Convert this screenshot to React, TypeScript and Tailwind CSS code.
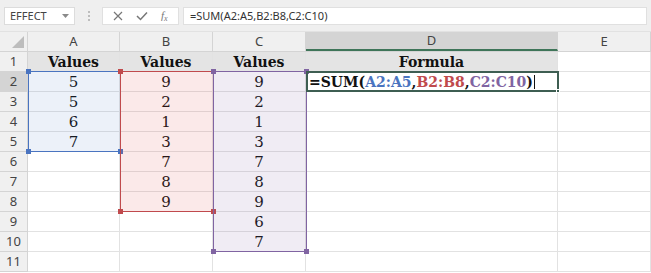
import React from 'react';

const cols = [
  { key: 'A', w: 'w-[92px]' },
  { key: 'B', w: 'w-[93px]' },
  { key: 'C', w: 'w-[93px]' },
  { key: 'D', w: 'w-[252px]' },
  { key: 'E', w: 'w-[93px]' },
];

const data: Record<string, string[]> = {
  A: ['Values', '5', '5', '6', '7'],
  B: ['Values', '9', '2', '1', '3', '7', '8', '9'],
  C: ['Values', '9', '2', '1', '3', '7', '8', '9', '6', '7'],
  D: ['Formula'],
};

const serif = { fontFamily: '"DejaVu Serif", "Liberation Serif", serif' };
const sans = { fontFamily: '"Noto Sans", "Open Sans", sans-serif' };

function Handle({ pos, color }: { pos: string; color: string }) {
  return <span className={`absolute w-[5px] h-[5px] ${pos} ${color}`} />;
}

function Range({ box, border, fill, handle }: { box: string; border: string; fill: string; handle: string }) {
  return (
    <div className={`absolute ${box} border ${border} ${fill} pointer-events-none`}>
      <Handle pos="-left-[3px] -top-[3px]" color={handle} />
      <Handle pos="-right-[3px] -top-[3px]" color={handle} />
      <Handle pos="-left-[3px] -bottom-[3px]" color={handle} />
      <Handle pos="-right-[3px] -bottom-[3px]" color={handle} />
    </div>
  );
}

export default function App() {
  const rows = Array.from({ length: 11 }, (_, i) => i + 1);

  return (
    <div className="w-[651px] h-[273px] bg-white overflow-hidden select-none">
      {/* formula bar */}
      <div className="h-[32px] bg-[#efefef] flex items-center gap-[4px] px-[4px] border-b border-[#e2e2e2]">
        <div className="w-[71px] h-[18px] bg-white border border-[#dcdcdc] flex items-center justify-between pl-[5px] pr-[5px]">
          <span className="text-[11px] text-[#444] leading-none" style={sans}>EFFECT</span>
          <svg width="7" height="4" viewBox="0 0 7 4"><path d="M0 0h7L3.5 4z" fill="#8a8a8a" /></svg>
        </div>
        <div className="w-[19px] flex flex-col items-center gap-[2px]">
          <span className="w-[2px] h-[2px] bg-[#bdbdbd]" />
          <span className="w-[2px] h-[2px] bg-[#bdbdbd]" />
          <span className="w-[2px] h-[2px] bg-[#bdbdbd]" />
        </div>
        <div className="w-[77px] h-[18px] bg-white border border-[#e0e0e0] flex items-center justify-around px-[4px]">
          <svg width="10" height="10" viewBox="0 0 10 10"><path d="M1 1l8 8M9 1l-8 8" stroke="#777" strokeWidth="1.2" /></svg>
          <svg width="12" height="10" viewBox="0 0 12 10"><path d="M1 5l3.5 3.5L11 1.5" stroke="#777" strokeWidth="1.5" fill="none" /></svg>
          <span className="text-[11px] italic text-[#777] leading-none" style={{ fontFamily: '"Liberation Serif", serif' }}>f<sub className="text-[8px]">x</sub></span>
        </div>
        <div className="flex-1 h-[18px] bg-white border border-[#e0e0e0] flex items-center pl-[6px]">
          <span className="text-[11px] text-[#333] leading-none" style={sans}>=SUM(A2:A5,B2:B8,C2:C10)</span>
        </div>
      </div>

      {/* column headers */}
      <div className="flex h-[20px] bg-[#f0f0f0] border-b border-[#d4d4d4]">
        <div className="w-[28px] relative border-r border-[#d4d4d4]">
          <svg className="absolute right-[3px] bottom-[3px]" width="12" height="12" viewBox="0 0 12 12"><path d="M12 0v12H0z" fill="#bdbdbd" /></svg>
        </div>
        {cols.map((c) => (
          <div
            key={c.key}
            className={`${c.w} flex items-center justify-center text-[13px] text-[#444] border-r border-[#d4d4d4] ${c.key === 'D' ? 'bg-[#d4d4d4] border-b-2 border-b-[#3f7559]' : ''}`}
            style={sans}
          >
            {c.key}
          </div>
        ))}
      </div>

      {/* grid */}
      <div className="relative">
        {rows.map((r) => (
          <div key={r} className="flex h-[20px]">
            <div
              className={`w-[28px] flex items-center justify-center text-[13px] text-[#444] border-r border-b border-[#d4d4d4] ${r === 2 ? 'bg-[#d4d4d4]' : 'bg-[#f0f0f0]'}`}
              style={sans}
            >
              {r}
            </div>
            {cols.map((c) => {
              const v = data[c.key]?.[r - 1];
              const head = r === 1 && c.key !== 'E';
              return (
                <div
                  key={c.key}
                  className={`${c.w} flex items-end justify-center border-r border-b border-[#e2e2e2] text-[#111] leading-[18px] ${head ? 'bg-[#e4e4e4] font-bold text-[14px]' : 'text-[15px]'}`}
                  style={serif}
                >
                  {v}
                </div>
              );
            })}
          </div>
        ))}

        <Range box="left-[28px] top-[19px] w-[93px] h-[81px]" border="border-[#4a74c0]" fill="bg-[#4472c4]/10" handle="bg-[#4a74c0]" />
        <Range box="left-[120px] top-[19px] w-[94px] h-[141px]" border="border-[#c04a4d]" fill="bg-[#e0474c]/12" handle="bg-[#c04a4d]" />
        <Range box="left-[213px] top-[19px] w-[94px] h-[181px]" border="border-[#8064a2]" fill="bg-[#8064a2]/12" handle="bg-[#8064a2]" />

        {/* active cell D2 in edit mode */}
        <div className="absolute left-[306px] top-[19px] w-[253px] h-[21px] border-2 border-[#3e5e52] flex items-center">
          <span className="pl-[1px] text-[14px] font-bold leading-none text-[#111] flex items-center" style={serif}>
            =SUM(<span className="text-[#4a74c0]">A2:A5</span>,<span className="text-[#c04a4d]">B2:B8</span>,<span className="text-[#8064a2]">C2:C10</span>)
            <span className="ml-[1px] w-[1px] h-[14px] bg-[#111]" />
          </span>
          <span className="absolute -right-[3px] -bottom-[3px] w-[4px] h-[4px] bg-[#3e5e52] border border-white" />
        </div>
      </div>
    </div>
  );
}
